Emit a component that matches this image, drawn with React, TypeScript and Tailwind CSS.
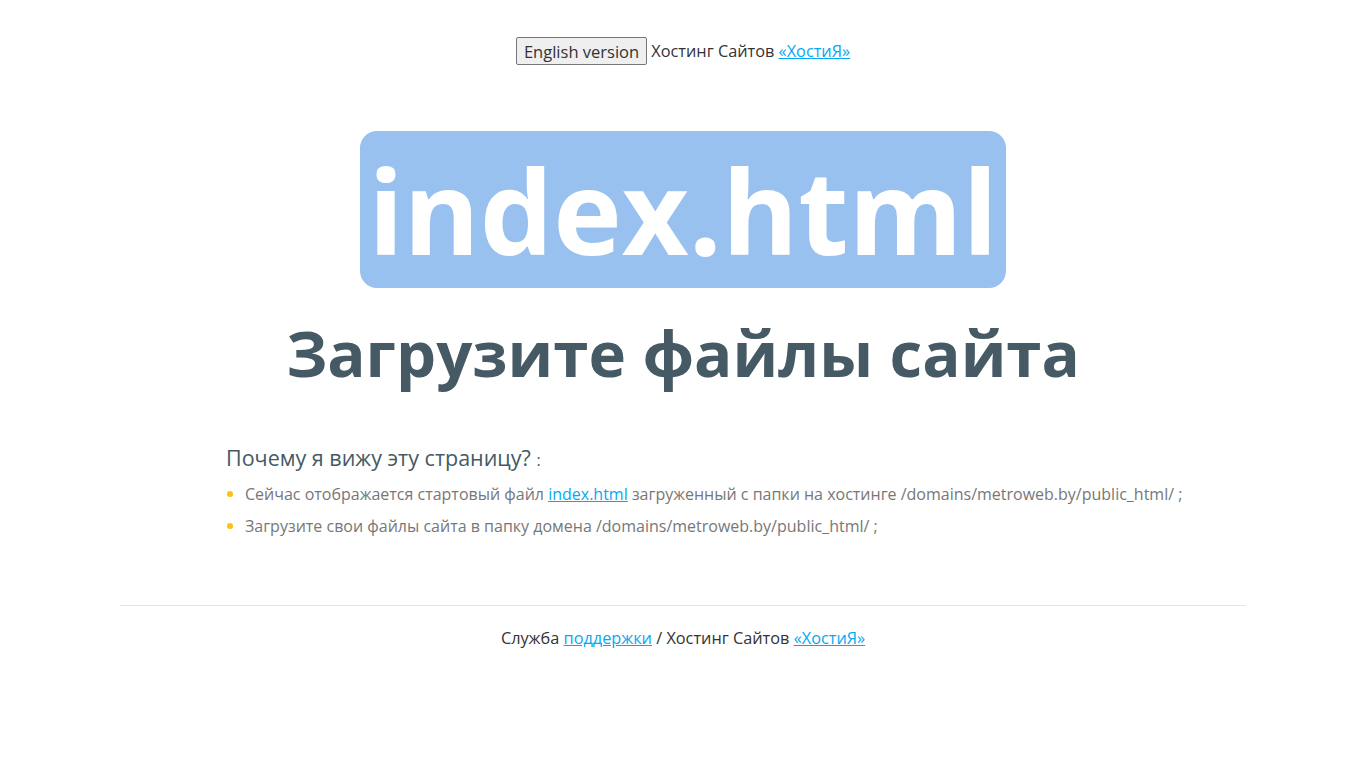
export default function App() {
  return (
    <div className="min-h-[768px] bg-white text-[#333] text-[16px]" style={{ fontFamily: '"Open Sans", sans-serif' }}>
      <div className="pt-[37px] text-center leading-[28px] text-[16.3px]">
        <button className="h-[28px] px-[7px] border border-[#767676] bg-[#efefef] rounded-[2px] text-[#333] text-[16.5px] align-top">English version</button>{" "}
        Хостинг Сайтов <a href="#" className="text-[#03a9f4] underline">«ХостиЯ»</a>
      </div>
      <div className="flex justify-center mt-[66px]">
        <div className="bg-[#98c1ef] rounded-[17px] w-[646px] h-[157px] flex items-center justify-center text-white font-bold text-[116px] leading-none">
          index.html
        </div>
      </div>
      <h1 className="text-center font-bold text-[#455a64] text-[63.5px] leading-none mt-[33px]">Загрузите файлы сайта</h1>
      <div className="pl-[226px] mt-[59px]">
        <div className="text-[#455a64] text-[21.5px] leading-[28px]">
          Почему я вижу эту страницу? <span className="text-[16px]">:</span>
        </div>
        <ul className="mt-[4px] text-[#777]">
          <li className="flex items-center leading-[32px]">
            <span className="w-[6px] h-[6px] rounded-full bg-[#ffc107] ml-[1px] mr-[12px]"></span>
            <span>Сейчас отображается стартовый файл <a href="#" className="text-[#03a9f4] underline">index.html</a> загруженный с папки на хостинге /domains/metroweb.by/public_html/ ;</span>
          </li>
          <li className="flex items-center leading-[32px]">
            <span className="w-[6px] h-[6px] rounded-full bg-[#ffc107] ml-[1px] mr-[12px]"></span>
            <span>Загрузите свои файлы сайта в папку домена /domains/metroweb.by/public_html/ ;</span>
          </li>
        </ul>
      </div>
      <hr className="mx-[120px] mt-[63px] border-t border-[#e5e5e5]" />
      <div className="text-center mt-[20px] leading-[24px] text-[16.3px]">
        Служба <a href="#" className="text-[#03a9f4] underline">поддержки</a> / Хостинг Сайтов <a href="#" className="text-[#03a9f4] underline">«ХостиЯ»</a>
      </div>
    </div>
  );
}
